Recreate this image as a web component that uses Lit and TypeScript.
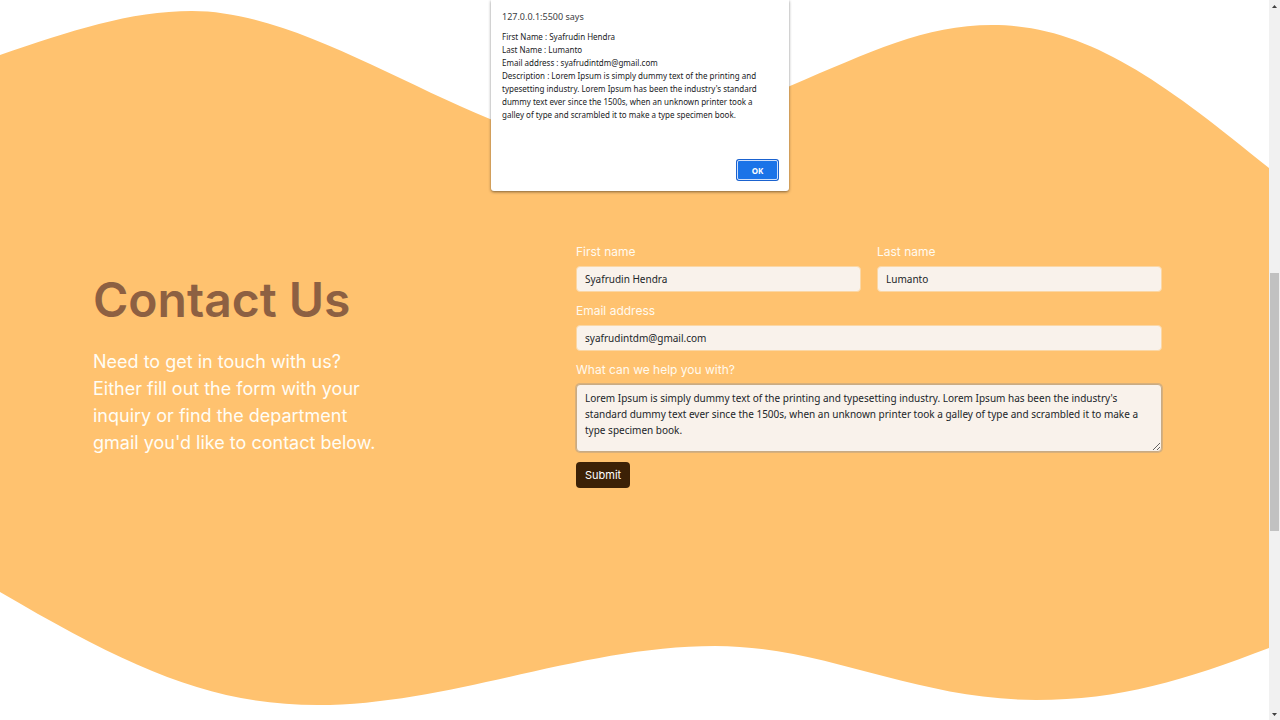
import { LitElement, html, css } from "lit";
import { customElement, state } from "lit/decorators.js";

const LOREM =
  "Lorem Ipsum is simply dummy text of the printing and typesetting industry. Lorem Ipsum has been the industry's standard dummy text ever since the 1500s, when an unknown printer took a galley of type and scrambled it to make a type specimen book.";

@customElement("alert-dialog")
class AlertDialog extends LitElement {
  static properties = { lines: { attribute: false } };
  declare lines: string[];

  static styles = css`
    :host {
      position: absolute;
      top: 0;
      left: 50%;
      transform: translateX(-50%);
      box-sizing: border-box;
      width: 298px;
      padding: 10px 10px 10px 11px;
      background: #fff;
      border-radius: 0 0 3px 3px;
      box-shadow: 0 1px 3px rgba(0, 0, 0, 0.5);
      font-family: "Noto Sans", "Open Sans", sans-serif;
      color: #202124;
    }
    .title {
      margin: 0 0 7px;
      font-size: 9px;
      line-height: 13px;
      font-weight: 400;
      color: #3c4043;
    }
    .body {
      min-height: 128px;
      padding-right: 12px;
      font-size: 8px;
      line-height: 13px;
    }
    .body p {
      margin: 0;
    }
    .actions {
      display: flex;
      justify-content: flex-end;
      padding: 2px 1px 1px 0;
    }
    .ok {
      width: 41px;
      height: 20px;
      padding: 0;
      border: 1px solid #cfe0fb;
      border-radius: 2px;
      box-shadow: 0 0 0 1px #1a62cf;
      background: #1a73e8;
      color: #fff;
      font: 700 8px "Noto Sans", sans-serif;
    }
  `;

  render() {
    return html`
      <h2 class="title">127.0.0.1:5500 says</h2>
      <div class="body">${this.lines.map((l) => html`<p>${l}</p>`)}</div>
      <div class="actions">
        <button class="ok" @click=${() => this.dispatchEvent(new Event("close"))}>OK</button>
      </div>
    `;
  }
}

@customElement("app-root")
class AppRoot extends LitElement {
  @state() private open = true;

  static styles = css`
    :host {
      display: flex;
      position: relative;
      min-height: 100vh;
      background: #fff;
    }
    .page {
      flex: 1;
      position: relative;
      display: grid;
      grid-template-columns: 483fr 586fr;
      align-items: center;
      box-sizing: border-box;
      padding: 11px 107px 0 93px;
      font-family: "Inter", sans-serif;
    }
    .wave {
      position: absolute;
      inset: 0;
      width: 100%;
      height: 100%;
    }
    .intro,
    .form {
      position: relative;
    }
    .intro {
      padding-bottom: 5px;
    }
    .heading {
      margin: 0 0 19px;
      font-size: 48px;
      line-height: 58px;
      font-weight: 600;
      color: #8d6042;
    }
    .lead {
      margin: 0;
      max-width: 290px;
      font-size: 18px;
      line-height: 27px;
      color: #fffdf5;
    }
    .form {
      display: grid;
      grid-template-columns: 1fr 1fr;
      column-gap: 16px;
      row-gap: 10px;
    }
    .field {
      display: flex;
      flex-direction: column;
      gap: 5px;
    }
    .wide {
      grid-column: 1 / -1;
    }
    label {
      font-size: 12px;
      line-height: 18px;
      color: #fffaf0;
    }
    .control {
      box-sizing: border-box;
      width: 100%;
      height: 26px;
      margin: 0;
      padding: 0 8px;
      border: 1px solid #fbd7a5;
      border-radius: 4px;
      outline: none;
      background: #f9f2eb;
      color: #212529;
      font: 10px/16px "Noto Sans", "Open Sans", sans-serif;
    }
    .area {
      height: 68px;
      padding: 5px 8px;
      border-color: #c9ab84;
      box-shadow: 0 0 0 1px #d9b07a;
      resize: vertical;
    }
    .submit {
      justify-self: start;
      height: 26px;
      padding: 0 9px;
      border: 0;
      border-radius: 4px;
      background: #3c2106;
      color: #fff;
      font: 11px/16px "Inter", sans-serif;
    }
    .scrollbar {
      display: flex;
      flex-direction: column;
      align-items: center;
      width: 11px;
      background: #f1f1f1;
    }
    .arrow {
      width: 11px;
      height: 14px;
    }
    .before {
      flex: 259;
    }
    .thumb {
      flex: 258;
      width: 9px;
      background: #c1c1c1;
    }
    .after {
      flex: 175;
    }
  `;

  render() {
    return html`
      <main class="page">
        <svg class="wave" viewBox="0 0 1269 720" preserveAspectRatio="none" aria-hidden="true">
          <path
            fill="#ffc26f"
            d="M0 55C70 31 130 11 192 11C285 11 390 78 490 119C590 160 690 133 790 86C870 52 925 25 992 25C1085 25 1160 79 1269 168V648C1185 680 1120 700 1036 700C915 700 825 646 715 646C580 646 450 705 318 705C210 705 130 668 0 592Z"
          />
        </svg>
        <section class="intro">
          <h1 class="heading">Contact Us</h1>
          <p class="lead">
            Need to get in touch with us? Either fill out the form with your inquiry or find the
            department gmail you'd like to contact below.
          </p>
        </section>
        <form class="form" @submit=${this.send}>
          <div class="field">
            <label for="first">First name</label>
            <input class="control" id="first" type="text" value="Syafrudin Hendra" />
          </div>
          <div class="field">
            <label for="last">Last name</label>
            <input class="control" id="last" type="text" value="Lumanto" />
          </div>
          <div class="field wide">
            <label for="email">Email address</label>
            <input class="control" id="email" type="email" value="syafrudintdm@gmail.com" />
          </div>
          <div class="field wide">
            <label for="help">What can we help you with?</label>
            <textarea class="control area" id="help" .value=${LOREM}></textarea>
          </div>
          <button class="submit" type="submit">Submit</button>
        </form>
      </main>
      <div class="scrollbar" aria-hidden="true">
        <svg class="arrow" viewBox="0 0 11 14"><path fill="#404040" d="M3 8L5.5 5L8 8Z" /></svg>
        <div class="before"></div>
        <div class="thumb"></div>
        <div class="after"></div>
        <svg class="arrow" viewBox="0 0 11 14"><path fill="#404040" d="M3 7L5.5 10L8 7Z" /></svg>
      </div>
      ${this.open
        ? html`<alert-dialog
            role="alertdialog"
            .lines=${[
              "First Name : Syafrudin Hendra",
              "Last Name : Lumanto",
              "Email address : syafrudintdm@gmail.com",
              "Description : " + LOREM,
            ]}
            @close=${() => (this.open = false)}
          ></alert-dialog>`
        : null}
    `;
  }

  private send(e: Event) {
    e.preventDefault();
    this.open = true;
  }
}
